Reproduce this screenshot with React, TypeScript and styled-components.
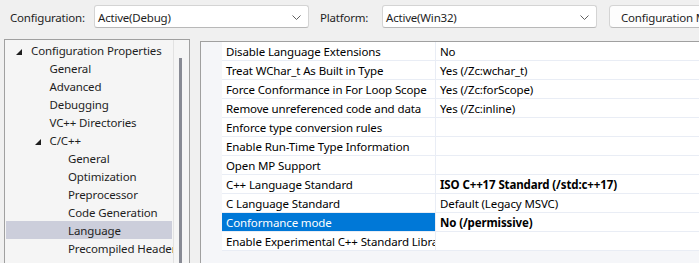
import React from 'react';
import styled, { createGlobalStyle } from 'styled-components';

const GlobalStyle = createGlobalStyle`
  html, body {
    margin: 0;
    padding: 0;
    background: #f0f0f0;
    overflow: hidden;
  }
  body {
    font-family: "Noto Sans", "Open Sans", sans-serif;
    font-size: 11.5px;
    letter-spacing: -0.12px;
    color: #1e1e1e;
  }
`

const Page = styled.div`
  width: 699px;
  height: 263px;
  display: flex;
  flex-direction: column;
  overflow: hidden;
`
const TopBar = styled.div`
  display: flex;
  align-items: center;
  padding: 5px 0 0 10px;
  height: 23px;
  white-space: nowrap;
  font-size: 11.5px;
  letter-spacing: -0.2px;
`
const Label = styled.div<{ $width: number }>`
  width: ${p => p.$width}px;
  flex: none;
  color: #1e1e1e;
  padding-top: 1px;
`
const Combo = styled.div`
  flex: none;
  width: 215px;
  height: 23px;
  box-sizing: border-box;
  background: #fff;
  border: 1px solid #d4d4d4;
  border-bottom-color: #b8b8b8;
  border-radius: 3px;
  display: flex;
  align-items: center;
  justify-content: space-between;
  padding: 1px 7px 0 3px;
  margin-right: 11px;
`
const ConfigButton = styled.div`
  flex: none;
  height: 23px;
  box-sizing: border-box;
  margin-left: 1px;
  background: #fdfdfd;
  border: 1px solid #d4d4d4;
  border-bottom-color: #bcbcbc;
  border-radius: 4px;
  display: flex;
  align-items: center;
  padding: 1px 12px 0 11px;
`
const Content = styled.div`
  flex: 1;
  display: flex;
  align-items: flex-start;
  margin-top: 11px;
  padding-left: 4px;
  overflow: hidden;
`
const TreePanel = styled.div`
  flex: none;
  width: 186px;
  height: 240px;
  box-sizing: border-box;
  border: 1px solid #a0a0a0;
  background: #f5f5f5;
  display: flex;
`
const TreeRows = styled.div`
  flex: 1;
  padding: 1px 1px 0 1px;
  overflow: hidden;
`
const TreeRow = styled.div<{ $level: number; $selected?: boolean }>`
  height: 18px;
  display: flex;
  align-items: center;
  padding-left: ${p => 10 + p.$level * 18.5}px;
  background: ${p => (p.$selected ? '#cccedb' : 'transparent')};
  white-space: nowrap;
  color: #1e1e1e;
`
const Expander = styled.span`
  width: 15px;
  flex: none;
  display: flex;
  align-items: center;
  padding-top: 3px;
`
const ScrollTrack = styled.div`
  flex: none;
  width: 15px;
  border-left: 1px solid #e2e2e2;
  position: relative;
`
const ScrollThumb = styled.div`
  position: absolute;
  left: 5px;
  top: 18px;
  width: 3px;
  height: 220px;
  background: #888a94;
`
const Grid = styled.div`
  flex: 1;
  margin-left: 10px;
  margin-top: 2px;
  height: 240px;
  border-top: 1px solid #a0a0a0;
  border-left: 1px solid #a0a0a0;
  background: #f5f6f9;
`
const GridRow = styled.div`
  display: grid;
  grid-template-columns: 21px 214px 1fr;
  height: 19px;
`
const Gutter = styled.div``
const NameCell = styled.div<{ $selected?: boolean }>`
  background: ${p => (p.$selected ? '#0078d7' : '#fff')};
  color: ${p => (p.$selected ? '#fff' : '#000')};
  border-right: 1px solid #e9edf5;
  border-bottom: 1px solid #e9edf5;
  padding: 1px 0 0 4px;
  line-height: 17px;
  white-space: nowrap;
  overflow: hidden;
`
const ValueCell = styled.div<{ $bold?: boolean }>`
  background: #fff;
  color: #000;
  border-bottom: 1px solid #e9edf5;
  padding: 1px 0 0 4px;
  line-height: 17px;
  font-weight: ${p => (p.$bold ? 700 : 400)};
  white-space: nowrap;
  overflow: hidden;
`

const Chevron = () => (
  <svg width="9" height="5" viewBox="0 0 9 5">
    <path d="M0.5 0.5 L4.5 4.5 L8.5 0.5" fill="none" stroke="#606060" strokeWidth="1" />
  </svg>
)

const Triangle = () => (
  <svg width="6" height="6" viewBox="0 0 6 6">
    <polygon points="6,0 6,6 0,6" fill="#1e1e1e" />
  </svg>
)

const treeItems = [
  { label: 'Configuration Properties', level: 0, open: true },
  { label: 'General', level: 1 },
  { label: 'Advanced', level: 1 },
  { label: 'Debugging', level: 1 },
  { label: 'VC++ Directories', level: 1 },
  { label: 'C/C++', level: 1, open: true },
  { label: 'General', level: 2 },
  { label: 'Optimization', level: 2 },
  { label: 'Preprocessor', level: 2 },
  { label: 'Code Generation', level: 2 },
  { label: 'Language', level: 2, selected: true },
  { label: 'Precompiled Headers', level: 2 },
  { label: 'Output Files', level: 2 },
]

const props = [
  { name: 'Disable Language Extensions', value: 'No' },
  { name: 'Treat WChar_t As Built in Type', value: 'Yes (/Zc:wchar_t)' },
  { name: 'Force Conformance in For Loop Scope', value: 'Yes (/Zc:forScope)' },
  { name: 'Remove unreferenced code and data', value: 'Yes (/Zc:inline)' },
  { name: 'Enforce type conversion rules', value: '' },
  { name: 'Enable Run-Time Type Information', value: '' },
  { name: 'Open MP Support', value: '' },
  { name: 'C++ Language Standard', value: 'ISO C++17 Standard (/std:c++17)', bold: true },
  { name: 'C Language Standard', value: 'Default (Legacy MSVC)' },
  { name: 'Conformance mode', value: 'No (/permissive)', bold: true, selected: true },
  { name: 'Enable Experimental C++ Standard Library Modules', value: '' },
]

function App() {
  return (
    <Page>
      <GlobalStyle />
      <TopBar>
        <Label $width={84}>Configuration:</Label>
        <Combo>
          <span>Active(Debug)</span>
          <Chevron />
        </Combo>
        <Label $width={62}>Platform:</Label>
        <Combo>
          <span>Active(Win32)</span>
          <Chevron />
        </Combo>
        <ConfigButton>Configuration Manager...</ConfigButton>
      </TopBar>
      <Content>
        <TreePanel>
          <TreeRows>
            {treeItems.map((item, i) => (
              <TreeRow key={i} $level={item.level} $selected={item.selected}>
                <Expander>{item.open && <Triangle />}</Expander>
                {item.label}
              </TreeRow>
            ))}
          </TreeRows>
          <ScrollTrack>
            <ScrollThumb />
          </ScrollTrack>
        </TreePanel>
        <Grid>
          {props.map((p, i) => (
            <GridRow key={i}>
              <Gutter />
              <NameCell $selected={p.selected}>{p.name}</NameCell>
              <ValueCell $bold={p.bold}>{p.value}</ValueCell>
            </GridRow>
          ))}
        </Grid>
      </Content>
    </Page>
  );
}

export default App;
